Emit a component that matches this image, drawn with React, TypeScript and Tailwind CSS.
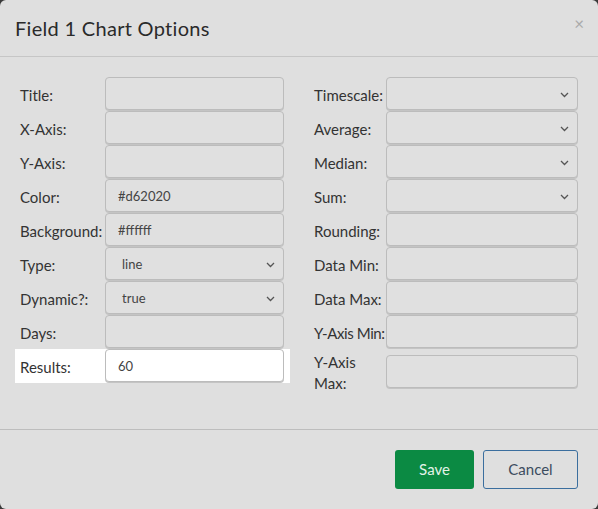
const Chevron = () => (
  <svg width="9" height="6" viewBox="0 0 9 6" className="absolute right-[8px] top-[14px]">
    <polyline points="1,1 4.5,4.5 8,1" fill="none" stroke="#555" strokeWidth="1.3" />
  </svg>
);

const Field = ({ value, select, white }: { value?: string; select?: boolean; white?: boolean }) => (
  <div
    className={
      "relative h-[33px] w-full rounded-[4px] border border-[#bcbcbc] shadow-[0_1px_0_#c4c4c4] flex items-center pt-[2px] text-[13px] text-[#444] " +
      (white ? "bg-white" : "bg-[#e0e0e0]") +
      (select ? " pl-[16px]" : " pl-[12px]")
    }
  >
    {value}
    {select && <Chevron />}
  </div>
);

const left = [
  { label: "Title:" },
  { label: "X-Axis:" },
  { label: "Y-Axis:" },
  { label: "Color:", value: "#d62020" },
  { label: "Background:", value: "#ffffff" },
  { label: "Type:", value: "line", select: true },
  { label: "Dynamic?:", value: "true", select: true },
  { label: "Days:" },
];

const right = [
  { label: "Timescale:", select: true },
  { label: "Average:", select: true },
  { label: "Median:", select: true },
  { label: "Sum:", select: true },
  { label: "Rounding:" },
  { label: "Data Min:" },
  { label: "Data Max:" },
  { label: "Y-Axis Min:", tight: true },
];

export default function App() {
  return (
    <div className="w-[598px] h-[509px] bg-[#3a3a3a] overflow-hidden" style={{ fontFamily: "Lato, 'Liberation Sans', sans-serif" }}>
      <div className="w-[598px] h-[509px] rounded-[6px] bg-[#dfdfdf] flex flex-col">
        <div className="h-[57px] border-b border-[#c6c6c6] flex items-center justify-between pl-[15px] pr-[14px]">
          <h1 className="text-[20px] text-[#2a2a2a] font-normal tracking-[0.3px] pb-[1px]">Field 1 Chart Options</h1>
          <span className="text-[#aaa] text-[17px] leading-none mb-[10px]">×</span>
        </div>
        <div className="flex pt-[20px] pb-[36px] pl-[15px] pr-[20px] text-[15px] text-[#333]">
          <div className="w-[275px] flex flex-col">
            {left.map((r) => (
              <div key={r.label} className="h-[34px] flex items-start pl-[5px] pr-[6px]">
                <div className="w-[85px] h-[33px] pt-[3px] flex items-center shrink-0">{r.label}</div>
                <Field value={r.value} select={r.select} />
              </div>
            ))}
            <div className="h-[34px] flex items-start pl-[5px] pr-[6px] bg-white">
              <div className="w-[85px] h-[33px] pt-[3px] flex items-center shrink-0">Results:</div>
              <Field value="60" white />
            </div>
          </div>
          <div className="flex-1 pl-[24px] flex flex-col">
            {right.map((r) => (
              <div key={r.label} className="h-[34px] flex items-start">
                <div
                  className={
                    "w-[72px] h-[33px] pt-[3px] flex items-center shrink-0 whitespace-nowrap" +
                    (r.tight ? " tracking-[-0.4px]" : "")
                  }
                >
                  {r.label}
                </div>
                <Field select={r.select} />
              </div>
            ))}
            <div className="h-[44px] flex items-center">
              <div className="w-[72px] shrink-0 leading-[21px] pt-[3px]">
                Y-Axis
                <br />
                Max:
              </div>
              <Field />
            </div>
          </div>
        </div>
        <div className="border-t border-[#bdbdbd] flex justify-end gap-[9px] pt-[20px] pr-[20px]">
          <button className="w-[79px] h-[39px] rounded-[3px] bg-[#0b8a43] text-[#e3f3e8] text-[15px]">Save</button>
          <button className="w-[95px] h-[39px] rounded-[3px] border border-[#3b6e9e] text-[#3c4c5e] text-[15px]">Cancel</button>
        </div>
      </div>
    </div>
  );
}
